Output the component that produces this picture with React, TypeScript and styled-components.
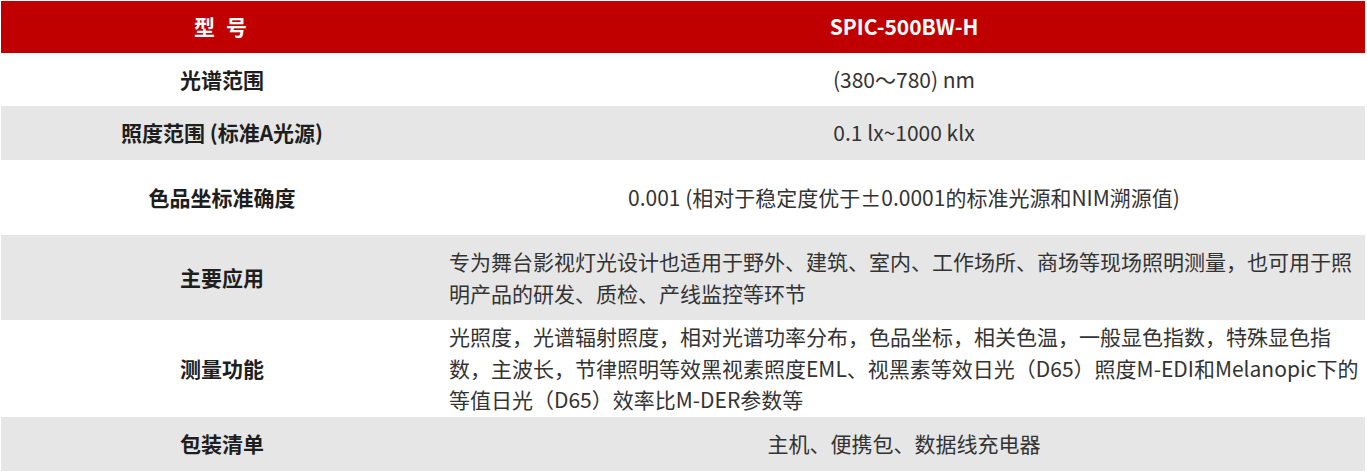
import styled, { createGlobalStyle } from 'styled-components'

const GlobalStyle = createGlobalStyle`
  html, body {
    margin: 0;
    padding: 0;
    background: #fff;
  }
  * {
    box-sizing: border-box;
  }
`;

const Wrapper = styled.div`
  padding: 1px 2px 0 1px;
  font-family: "Noto Sans CJK SC", "Noto Sans", sans-serif;
  font-size: 21px;
  line-height: 1.5;
  color: #333;
`;

const Row = styled.div<{ $h: number; $shade?: 'head' | 'gray' | 'white' }>`
  display: grid;
  grid-template-columns: 442px 1fr;
  height: ${(p) => p.$h}px;
  background: ${(p) =>
    p.$shade === 'head' ? '#c00000' : p.$shade === 'gray' ? '#e6e6e6' : '#fff'};
  color: ${(p) => (p.$shade === 'head' ? '#fff' : '#333')};
`;

const Label = styled.div<{ $spaced?: boolean }>`
  display: flex;
  align-items: center;
  justify-content: center;
  font-weight: bold;
  color: #1e1e1e;
  letter-spacing: ${(p) => (p.$spaced ? '3px' : '0')};
  white-space: pre;
`;

const HeadLabel = styled(Label)`
  color: #fff;
`;

const Value = styled.div<{ $left?: boolean; $bold?: boolean }>`
  display: flex;
  align-items: center;
  justify-content: ${(p) => (p.$left ? 'flex-start' : 'center')};
  text-align: ${(p) => (p.$left ? 'left' : 'center')};
  padding: 0 6px;
  font-weight: ${(p) => (p.$bold ? 'bold' : 'normal')};
`;

const specs = [
  { label: '光谱范围', value: '(380～780) nm', h: 53, shade: 'white' as const },
  { label: '照度范围 (标准A光源)', value: '0.1 lx~1000 klx', h: 54, shade: 'gray' as const },
  {
    label: '色品坐标准确度',
    value: '0.001 (相对于稳定度优于±0.0001的标准光源和NIM溯源值)',
    h: 75,
    shade: 'white' as const,
  },
  {
    label: '主要应用',
    value:
      '专为舞台影视灯光设计也适用于野外、建筑、室内、工作场所、商场等现场照明测量，也可用于照明产品的研发、质检、产线监控等环节',
    h: 85,
    shade: 'gray' as const,
    left: true,
  },
  {
    label: '测量功能',
    value:
      '光照度，光谱辐射照度，相对光谱功率分布，色品坐标，相关色温，一般显色指数，特殊显色指数，主波长，节律照明等效黑视素照度EML、视黑素等效日光（D65）照度M-EDI和Melanopic下的等值日光（D65）效率比M-DER参数等',
    h: 97,
    shade: 'white' as const,
    left: true,
  },
  { label: '包装清单', value: '主机、便携包、数据线充电器', h: 54, shade: 'gray' as const },
];

const App = () => {
  return (
    <Wrapper>
      <GlobalStyle />
      <Row $h={52} $shade="head">
        <HeadLabel $spaced>{'型 号'}</HeadLabel>
        <Value $bold>SPIC-500BW-H</Value>
      </Row>
      {specs.map((s) => (
        <Row key={s.label} $h={s.h} $shade={s.shade}>
          <Label>{s.label}</Label>
          <Value $left={s.left}>{s.value}</Value>
        </Row>
      ))}
    </Wrapper>
  );
};

export default App;
